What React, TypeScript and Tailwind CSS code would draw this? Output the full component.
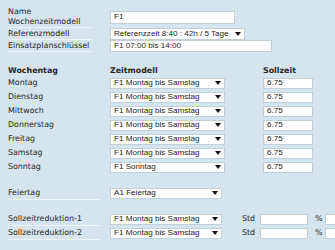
const label = "font-['DejaVu_Sans',sans-serif] text-[7.9px] text-[#262626] leading-[10px] whitespace-nowrap shrink-0";
const field = "bg-white border border-[#c3cfd7] font-['Liberation_Sans',Arial,sans-serif] text-[8.1px] text-[#1e1e1e] leading-[10px] pl-[3px] flex items-center overflow-hidden whitespace-nowrap shrink-0";

function Arrow() {
  return (
    <svg width="6" height="4" viewBox="0 0 6 4" className="shrink-0">
      <polygon points="0,0 6,0 3,4" fill="#111" />
    </svg>
  );
}

function Select({ value, w, h = "h-[11px]" }: { value: string; w: string; h?: string }) {
  return (
    <div className={`${field} ${w} ${h} justify-between pr-[3px]`}>
      <span>{value}</span>
      <Arrow />
    </div>
  );
}

function Input({ value = "", w, h = "h-[11px]" }: { value?: string; w: string; h?: string }) {
  return <div className={`${field} ${w} ${h}`}>{value}</div>;
}

const days = ["Montag", "Dienstag", "Mittwoch", "Donnerstag", "Freitag", "Samstag", "Sonntag"];

export default function App() {
  return (
    <div className="w-[335px] h-[250px] bg-[#d4e5ef] overflow-hidden pl-2 pt-[6px]">
      {/* Kopfdaten */}
      <div className="flex items-center h-[22px]">
        <div className={`${label} w-[84px] h-full border-b border-[#eef5f9] flex flex-col justify-center`}>
          <span>Name</span>
          <span>Wochenzeitmodell</span>
        </div>
        <div className="ml-[18px]">
          <Input value="F1" w="w-[125px]" h="h-[13px]" />
        </div>
      </div>
      <div className="flex items-center h-[12px]">
        <div className={`${label} w-[84px] h-full border-b border-[#eef5f9] flex items-center`}>Referenzmodell</div>
        <div className="ml-[18px]">
          <Select value="Referenzzeit 8:40 : 42h / 5 Tage" w="w-[135px]" h="h-[12px]" />
        </div>
      </div>
      <div className="flex items-center h-[12px]">
        <div className={`${label} w-[84px] h-full border-b border-[#eef5f9] flex items-center`}>Einsatzplanschlüssel</div>
        <div className="ml-[18px]">
          <Input value="F1 07:00 bis 14:00" w="w-[162px]" h="h-[12px]" />
        </div>
      </div>

      {/* Wochentage */}
      <div className="flex items-center h-[10px] mt-[14px]">
        <div className={`${label} font-bold w-[102px]`}>Wochentag</div>
        <div className={`${label} font-bold w-[153px]`}>Zeitmodell</div>
        <div className={`${label} font-bold`}>Sollzeit</div>
      </div>
      {days.map((d) => (
        <div key={d} className="flex items-center h-[14px]">
          <div className={`${label} w-[102px]`}>{d}</div>
          <Select value={d === "Sonntag" ? "F1 Sonntag" : "F1 Montag bis Samstag"} w="w-[115px]" />
          <div className="ml-[38px]">
            <Input value="6.75" w="w-[50px]" />
          </div>
        </div>
      ))}

      {/* Feiertag */}
      <div className="flex items-center h-[14px] mt-[12px]">
        <div className={`${label} w-[92px] h-full border-b border-[#eef5f9] flex items-center`}>Feiertag</div>
        <div className="ml-[10px] shrink-0">
          <Select value="A1 Feiertag" w="w-[112px]" />
        </div>
      </div>

      {/* Reduktionen */}
      <div className="mt-[12px]">
        {["Sollzeitreduktion-1", "Sollzeitreduktion-2"].map((r) => (
          <div key={r} className="flex items-center h-[14px] w-max">
            <div className={`${label} w-[92px] h-full border-b border-[#eef5f9] flex items-center`}>{r}</div>
            <div className="ml-[10px] shrink-0">
              <Select value="F1 Montag bis Samstag" w="w-[112px]" />
            </div>
            <div className={`${label} ml-[20px] w-[18px]`}>Std</div>
            <Input w="w-[48px]" />
            <div className={`${label} ml-[7px] w-[10px]`}>%</div>
            <Input w="w-[40px]" />
          </div>
        ))}
      </div>
    </div>
  );
}
